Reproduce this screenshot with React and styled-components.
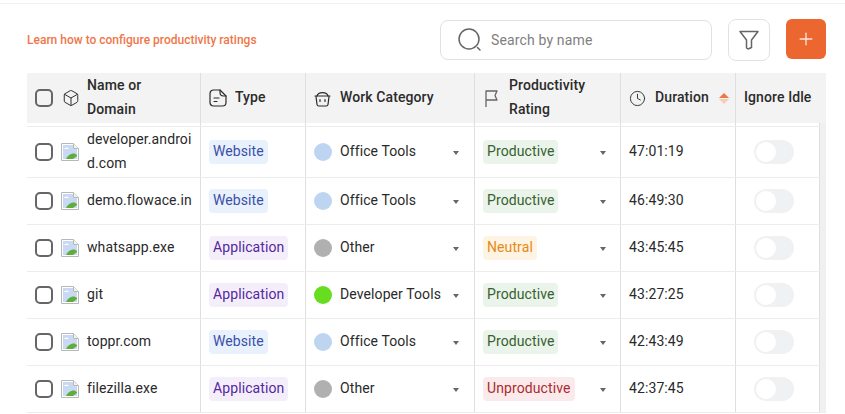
import React from "react";
import styled, { createGlobalStyle } from "styled-components";
import { Box, Plus, Clock } from "lucide-react";

const COLS = "174px 105px 169px 146px 115px 84px";

const rows = [
  { name: "developer.android.com", type: "Website", cat: "Office Tools", dot: "#bdd5f0", rating: "Productive", time: "47:01:19", h: 51 },
  { name: "demo.flowace.in", type: "Website", cat: "Office Tools", dot: "#bdd5f0", rating: "Productive", time: "46:49:30", h: 47 },
  { name: "whatsapp.exe", type: "Application", cat: "Other", dot: "#b0b0b0", rating: "Neutral", time: "43:45:45", h: 47 },
  { name: "git", type: "Application", cat: "Developer Tools", dot: "#66dd1f", rating: "Productive", time: "43:27:25", h: 47 },
  { name: "toppr.com", type: "Website", cat: "Office Tools", dot: "#bdd5f0", rating: "Productive", time: "42:43:49", h: 47 },
  { name: "filezilla.exe", type: "Application", cat: "Other", dot: "#b0b0b0", rating: "Unproductive", time: "42:37:45", h: 47 },
];

const tagColours = {
  Website: ["#e8f1fc", "#3b4fa8"],
  Application: ["#f4eefb", "#55279f"],
  Productive: ["#eaf4ea", "#38602f"],
  Neutral: ["#fef4e4", "#e68a13"],
  Unproductive: ["#fbeaeb", "#ab2a30"],
};

const GlobalStyle = createGlobalStyle`
  html, body {
    margin: 0;
    height: 414px;
    overflow: hidden;
    background: #fff;
    font-family: Roboto, "Liberation Sans", sans-serif;
  }
`;

const Page = styled.div`
  width: 845px;
  height: 414px;
  overflow: hidden;
  padding-top: 3px;
  box-sizing: border-box;
`;

const TopLine = styled.div`
  height: 1px;
  background: #f0f0f0;
`;

const Toolbar = styled.div`
  display: flex;
  align-items: flex-start;
  height: 42px;
  margin: 15px 19px 12px 27px;
`;

const LearnLink = styled.a`
  flex: 1;
  margin-top: 14px;
  font-size: 12px;
  line-height: 14px;
  font-weight: 500;
  color: #f0764a;
`;

const SearchBox = styled.div`
  display: flex;
  align-items: center;
  box-sizing: border-box;
  width: 272px;
  height: 40px;
  margin-top: 1px;
  padding-left: 17px;
  border: 1px solid #e2e2e2;
  border-radius: 8px;
  color: #808080;
  font-size: 14px;
  gap: 9px;
  letter-spacing: 0.15px;
`;

const FilterButton = styled.div`
  display: flex;
  align-items: center;
  justify-content: center;
  box-sizing: border-box;
  width: 42px;
  height: 42px;
  margin-left: 16px;
  border: 1px solid #e2e2e2;
  border-radius: 8px;
  color: #666;
`;

const AddButton = styled.div`
  display: flex;
  align-items: center;
  justify-content: center;
  width: 40px;
  height: 40px;
  margin-left: 16px;
  border-radius: 6px;
  background: #ec672f;
  color: #fbe6da;
`;

const Table = styled.div`
  width: 799px;
  margin-left: 27px;
`;

const HeaderRow = styled.div`
  display: grid;
  grid-template-columns: ${COLS};
  height: 50px;
  background: #f3f3f3;
  color: #2b2b2b;
  font-size: 14px;
  font-weight: 500;
  line-height: 24px;
`;

const HeaderCell = styled.div`
  display: flex;
  align-items: center;
  box-sizing: border-box;
  padding-left: ${(p) => p.$pad ?? 8}px;
  gap: ${(p) => p.$gap ?? 9}px;
  border-right: ${(p) => (p.$last ? "none" : "1px solid #dfdfdf")};
  letter-spacing: 0.1px;
`;

const HeaderText = styled.span`
  padding-bottom: 2px;
`;

const HeaderName = styled(HeaderText)`
  width: 90px;
`;

const Spacer = styled.div`
  display: grid;
  grid-template-columns: ${COLS};
  height: 3px;
  border-bottom: 1px solid #ececec;
  width: 793px;
`;

const SpacerCell = styled.div`
  border-right: 1px solid #dfdfdf;
`;

const Body = styled.div`
  position: relative;
  width: 799px;
`;

const ScrollTrack = styled.div`
  position: absolute;
  top: -4px;
  right: 0;
  bottom: 0;
  width: 6px;
  background: #f0f0f0;
`;

const Row = styled.div`
  display: grid;
  grid-template-columns: ${COLS};
  height: ${(p) => p.$h}px;
  box-sizing: border-box;
  width: 793px;
  border-bottom: 1px solid #ececec;
  color: #2a2a2a;
  font-size: 14px;
  line-height: 24px;
  letter-spacing: 0.1px;
`;

const Cell = styled.div`
  display: flex;
  align-items: center;
  box-sizing: border-box;
  padding-left: ${(p) => p.$pad ?? 8}px;
  border-right: 1px solid #dfdfdf;
  min-width: 0;
`;

const Check = styled.span`
  flex: none;
  box-sizing: border-box;
  width: 18px;
  height: 18px;
  border: 2px solid #666;
  border-radius: 5px;
  margin-right: 8px;
`;

const HeaderCheck = styled(Check)`
  margin-right: 0;
`;

const CellText = styled.span`
  padding-bottom: 2px;
`;

const NameText = styled(CellText)`
  width: 106px;
  word-break: break-all;
`;

const Tag = styled.span`
  display: inline-block;
  padding: 0 4px;
  height: 24px;
  line-height: 22px;
  border-radius: 4px;
  background: ${(p) => tagColours[p.$kind][0]};
  color: ${(p) => tagColours[p.$kind][1]};
`;

const Dot = styled.span`
  flex: none;
  width: 18px;
  height: 18px;
  border-radius: 50%;
  background: ${(p) => p.$color};
  margin-right: 8px;
`;

const SelectBody = styled(CellText)`
  flex: 1;
`;

const TagHolder = styled.span`
  display: flex;
  flex: 1;
`;

const Caret = styled.span`
  flex: none;
  width: 0;
  height: 0;
  margin-right: ${(p) => p.$right}px;
  margin-top: 2px;
  border-left: 3.5px solid transparent;
  border-right: 3.5px solid transparent;
  border-top: 4px solid #666;
`;

const SortArrows = styled.span`
  display: inline-flex;
  flex-direction: column;
  gap: 1px;
  margin-left: 1px;
`;

const SortUp = styled.span`
  width: 0;
  height: 0;
  border-left: 5px solid transparent;
  border-right: 5px solid transparent;
  border-bottom: 5px solid #ec7a45;
`;

const SortDown = styled.span`
  width: 0;
  height: 0;
  border-left: 5px solid transparent;
  border-right: 5px solid transparent;
  border-top: 5px solid #f8cdb6;
`;

const Toggle = styled.span`
  display: flex;
  align-items: center;
  box-sizing: border-box;
  width: 40px;
  height: 24px;
  padding-left: 2px;
  margin-left: 10px;
  border-radius: 12px;
  background: #f0f1f2;
`;

const Knob = styled.span`
  width: 20px;
  height: 20px;
  border-radius: 50%;
  background: #fff;
`;

function BrokenImage() {
  return (
    <svg width="18" height="18" viewBox="0 0 18 18" style={{ flex: "none", marginRight: 8 }}>
      <path d="M.5.5h12l5 5v12H.5z" fill="#fff" stroke="#b8b8b8" />
      <path d="M2 2h10v4h4v10H2z" fill="#c9d9f4" />
      <path d="M3 6c1-1.800 4-1.800 5 0H3z" fill="#fff" />
      <path d="M5 16c1.500-3.500 5-6 8.500-5.500l2.500 1.500v1l-4 3z" fill="#5fae3c" />
      <path d="M12.500.5v5h5" fill="#f2f2f2" stroke="#b8b8b8" />
    </svg>
  );
}

function SearchIcon() {
  return (
    <svg width="24" height="24" viewBox="0 0 24 24" fill="none" stroke="#666" strokeWidth="1.500" strokeLinecap="round" style={{ flex: "none" }}>
      <circle cx="11" cy="11" r="10" />
      <path d="M19.500 19.500l2.500 2.500" />
    </svg>
  );
}

function FunnelIcon() {
  return (
    <svg width="20" height="20" viewBox="0 0 20 20" fill="none" stroke="currentColor" strokeWidth="1.500" strokeLinejoin="round">
      <path d="M1 1.500h18l-6.500 8.500v7.500l-3.500 1.500-1.500-1v-8z" />
    </svg>
  );
}

function NoteIcon() {
  return (
    <svg width="18" height="18" viewBox="0 0 18 18" fill="none" stroke="#2b2b2b" strokeWidth="1.200" strokeLinecap="round" strokeLinejoin="round" style={{ flex: "none" }}>
      <path d="M4.500 1h6.500l6 6v6.500a3.500 3.500 0 0 1-3.500 3.500h-9A3.500 3.500 0 0 1 1 13.500v-9A3.500 3.500 0 0 1 4.500 1z" />
      <path d="M11 1v2.500A3.500 3.500 0 0 0 14.500 7H17" />
      <path d="M5 9h5M5 12.500h3" />
    </svg>
  );
}

function BasketIcon() {
  return (
    <svg width="17" height="17" viewBox="0 0 17 17" fill="none" stroke="#2b2b2b" strokeWidth="1.200" strokeLinecap="round" strokeLinejoin="round" style={{ flex: "none" }}>
      <path d="M3 6C4 1.500 13 1.500 14 6" />
      <path d="M1 6h15" />
      <path d="M2 6.500l1 8a1.800 1.800 0 0 0 1.800 1.500h7.400a1.800 1.800 0 0 0 1.800-1.500l1-8" />
      <path d="M6 9.500v2M11 9.500v2" />
    </svg>
  );
}

function FlagIcon() {
  return (
    <svg width="13" height="17" viewBox="0 0 13 17" fill="none" stroke="#666" strokeWidth="1.300" strokeLinejoin="round" style={{ flex: "none" }}>
      <path d="M1 17V1h11l-2 4.500 2 4.500H1" />
    </svg>
  );
}

export default function App() {
  return (
    <Page>
      <GlobalStyle />
      <TopLine />
      <Toolbar>
        <LearnLink>Learn how to configure productivity ratings</LearnLink>
        <SearchBox>
          <SearchIcon />
          Search by name
        </SearchBox>
        <FilterButton>
          <FunnelIcon />
        </FilterButton>
        <AddButton>
          <Plus size={20} strokeWidth={1.600} />
        </AddButton>
      </Toolbar>
      <Table>
        <HeaderRow>
          <HeaderCell $gap={0}>
            <HeaderCheck />
            <Box size={18} strokeWidth={1.300} style={{ flex: "none", margin: "0 7px 0 9px" }} />
            <HeaderName>Name or Domain</HeaderName>
          </HeaderCell>
          <HeaderCell $gap={8}>
            <NoteIcon />
            <HeaderText>Type</HeaderText>
          </HeaderCell>
          <HeaderCell>
            <BasketIcon />
            <HeaderText>Work Category</HeaderText>
          </HeaderCell>
          <HeaderCell $pad={10} $gap={11}>
            <FlagIcon />
            <HeaderText>Productivity Rating</HeaderText>
          </HeaderCell>
          <HeaderCell>
            <Clock size={17} strokeWidth={1.300} />
            <HeaderText>Duration</HeaderText>
            <SortArrows>
              <SortUp />
              <SortDown />
            </SortArrows>
          </HeaderCell>
          <HeaderCell $last>
            <HeaderText>Ignore Idle</HeaderText>
          </HeaderCell>
        </HeaderRow>
        <Spacer>
          <SpacerCell />
          <SpacerCell />
          <SpacerCell />
          <SpacerCell />
          <SpacerCell />
          <SpacerCell />
        </Spacer>
        <Body>
          <ScrollTrack />
          {rows.map((r) => (
            <Row key={r.name} $h={r.h}>
              <Cell>
                <Check />
                <BrokenImage />
                <NameText>{r.name}</NameText>
              </Cell>
              <Cell>
                <Tag $kind={r.type}>{r.type}</Tag>
              </Cell>
              <Cell>
                <Dot $color={r.dot} />
                <SelectBody>{r.cat}</SelectBody>
                <Caret $right={15} />
              </Cell>
              <Cell>
                <TagHolder>
                  <Tag $kind={r.rating}>{r.rating}</Tag>
                </TagHolder>
                <Caret $right={14} />
              </Cell>
              <Cell>
                <CellText>{r.time}</CellText>
              </Cell>
              <Cell>
                <Toggle>
                  <Knob />
                </Toggle>
              </Cell>
            </Row>
          ))}
        </Body>
      </Table>
    </Page>
  );
}
